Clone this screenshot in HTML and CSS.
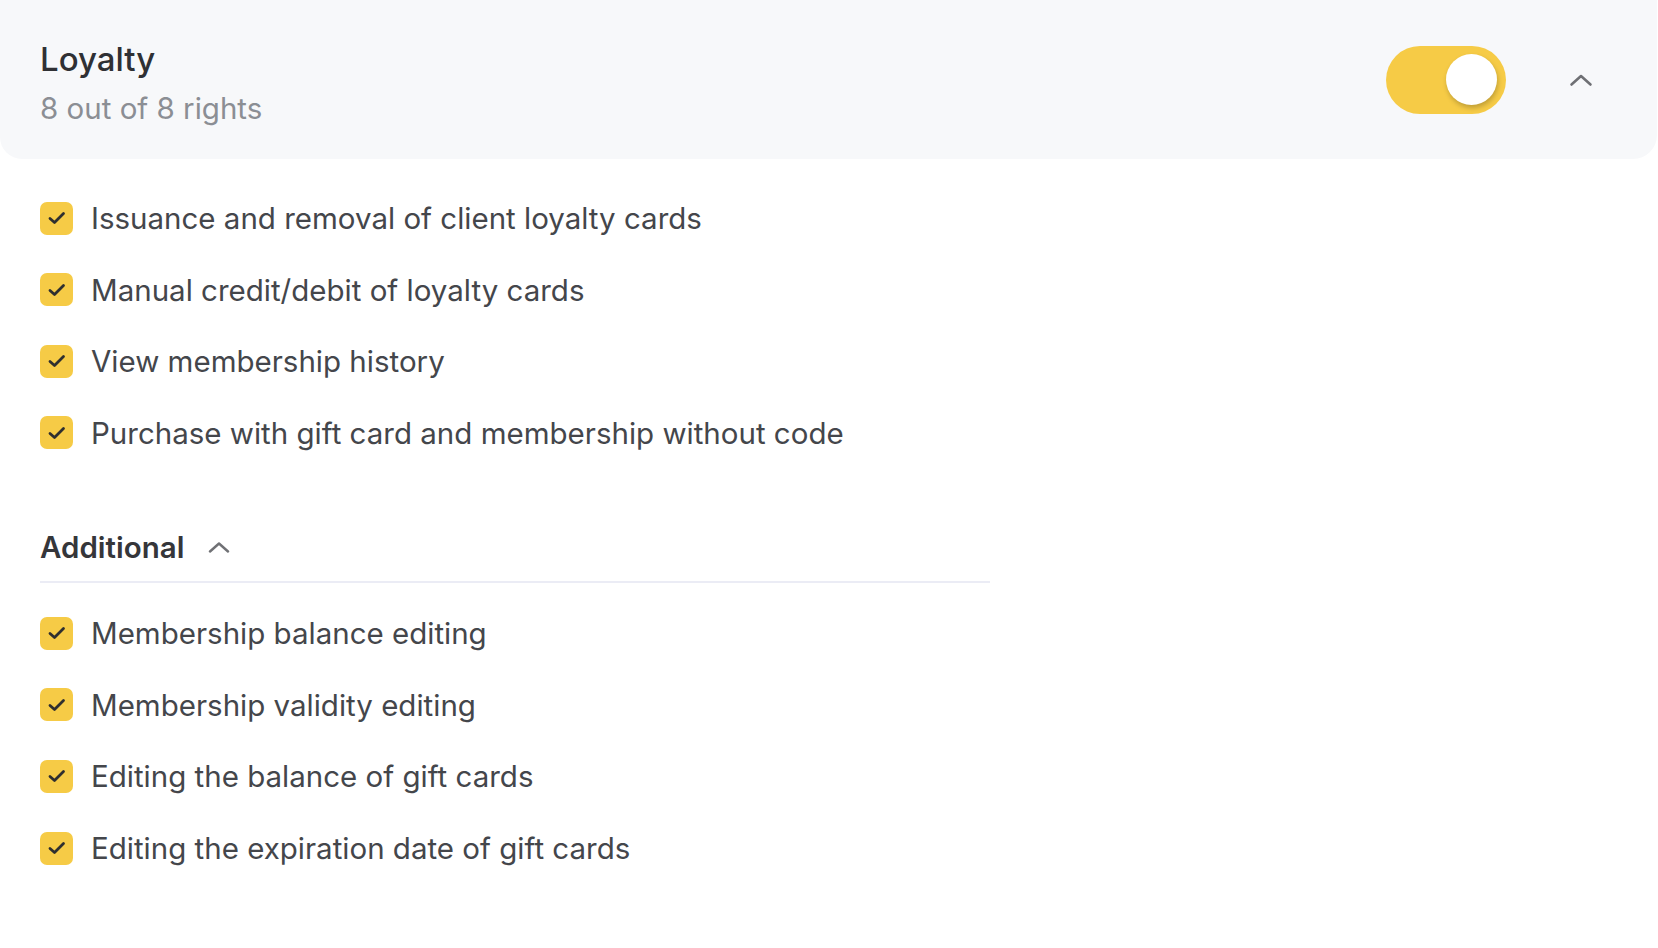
FILE: index.html
```html
<!DOCTYPE html>
<html lang="en">
<head>
<meta charset="utf-8">
<title>Loyalty rights</title>
<link rel="stylesheet" href="styles.css">
</head>
<body>
<section class="group">
  <header class="group-head">
    <div class="head-text">
      <div class="title">Loyalty</div>
      <div class="subtitle">8 out of 8 rights</div>
    </div>
    <div class="head-actions">
      <div class="toggle on"><span class="knob"></span></div>
      <svg class="chev-big" width="24" height="14" viewBox="0 0 24 14"><polyline points="2.5,11.5 12,3 21.5,11.5" fill="none" stroke="#6f7074" stroke-width="2.6" stroke-linecap="round" stroke-linejoin="round"/></svg>
    </div>
  </header>
  <div class="group-body">
    <ul class="rights first">
      <li class="right"><span class="cb"><svg width="20" height="16" viewBox="0 0 20 16"><polyline points="3,8.5 7.5,12.5 16.5,3.5" fill="none" stroke="#2f2f2f" stroke-width="2.8" stroke-linecap="round" stroke-linejoin="round"/></svg></span><span class="label">Issuance and removal of client loyalty cards</span></li>
      <li class="right"><span class="cb"><svg width="20" height="16" viewBox="0 0 20 16"><polyline points="3,8.5 7.5,12.5 16.5,3.5" fill="none" stroke="#2f2f2f" stroke-width="2.8" stroke-linecap="round" stroke-linejoin="round"/></svg></span><span class="label">Manual credit/debit of loyalty cards</span></li>
      <li class="right"><span class="cb"><svg width="20" height="16" viewBox="0 0 20 16"><polyline points="3,8.5 7.5,12.5 16.5,3.5" fill="none" stroke="#2f2f2f" stroke-width="2.8" stroke-linecap="round" stroke-linejoin="round"/></svg></span><span class="label">View membership history</span></li>
      <li class="right"><span class="cb"><svg width="20" height="16" viewBox="0 0 20 16"><polyline points="3,8.5 7.5,12.5 16.5,3.5" fill="none" stroke="#2f2f2f" stroke-width="2.8" stroke-linecap="round" stroke-linejoin="round"/></svg></span><span class="label">Purchase with gift card and membership without code</span></li>
    </ul>
    <div class="sub-head">
      <span class="sub-title">Additional</span>
      <svg class="chev-small" width="22" height="12" viewBox="0 0 22 12"><polyline points="2,10.5 11,2.5 20,10.5" fill="none" stroke="#707175" stroke-width="2.4" stroke-linecap="round" stroke-linejoin="round"/></svg>
    </div>
    <div class="divider"></div>
    <ul class="rights second">
      <li class="right"><span class="cb"><svg width="20" height="16" viewBox="0 0 20 16"><polyline points="3,8.5 7.5,12.5 16.5,3.5" fill="none" stroke="#2f2f2f" stroke-width="2.8" stroke-linecap="round" stroke-linejoin="round"/></svg></span><span class="label">Membership balance editing</span></li>
      <li class="right"><span class="cb"><svg width="20" height="16" viewBox="0 0 20 16"><polyline points="3,8.5 7.5,12.5 16.5,3.5" fill="none" stroke="#2f2f2f" stroke-width="2.8" stroke-linecap="round" stroke-linejoin="round"/></svg></span><span class="label">Membership validity editing</span></li>
      <li class="right"><span class="cb"><svg width="20" height="16" viewBox="0 0 20 16"><polyline points="3,8.5 7.5,12.5 16.5,3.5" fill="none" stroke="#2f2f2f" stroke-width="2.8" stroke-linecap="round" stroke-linejoin="round"/></svg></span><span class="label">Editing the balance of gift cards</span></li>
      <li class="right"><span class="cb"><svg width="20" height="16" viewBox="0 0 20 16"><polyline points="3,8.5 7.5,12.5 16.5,3.5" fill="none" stroke="#2f2f2f" stroke-width="2.8" stroke-linecap="round" stroke-linejoin="round"/></svg></span><span class="label">Editing the expiration date of gift cards</span></li>
    </ul>
  </div>
</section>
</body>
</html>
```
FILE: styles.css
```css
html, body {
  margin: 0;
  padding: 0;
  background: #ffffff;
}
body {
  font-family: Inter, "Noto Sans", "Liberation Sans", sans-serif;
  width: 1658px;
  height: 948px;
  overflow: hidden;
}
.group-head {
  height: 159px;
  box-sizing: border-box;
  width: 1657px;
  background: #f7f8fa;
  border-radius: 0 0 24px 22px;
  display: flex;
  align-items: center;
  justify-content: space-between;
  padding: 0 64px 0 40px;
}
.head-text {
  display: flex;
  flex-direction: column;
  margin-top: 6px;
}
.title {
  font-size: 33px;
  line-height: 40px;
  font-weight: 500;
  color: #2f3034;
}
.subtitle {
  margin-top: 11px;
  font-size: 29.5px;
  line-height: 36px;
  color: #8b8e94;
}
.head-actions {
  display: flex;
  align-items: center;
  gap: 63px;
  margin-top: 0;
}
.toggle {
  width: 120px;
  height: 68px;
  border-radius: 34px;
  background: #f6cb46;
  position: relative;
}
.toggle .knob {
  position: absolute;
  right: 9px;
  top: 8.5px;
  width: 51px;
  height: 51px;
  border-radius: 50%;
  background: #ffffff;
  box-shadow: 1px 3px 5px rgba(0, 0, 0, 0.22);
}
.chev-big {
  display: block;
}
.group-body {
  padding: 0 40px;
}
.rights {
  list-style: none;
  margin: 0;
  padding: 0;
  display: flex;
  flex-direction: column;
  gap: 31.6px;
}
.rights.first {
  margin-top: 39px;
}
.rights.second {
  margin-top: 30px;
}
.right {
  display: flex;
  align-items: center;
  height: 40px;
}
.cb {
  width: 33px;
  height: 33px;
  border-radius: 7px;
  background: #f6cb46;
  display: flex;
  align-items: center;
  justify-content: center;
  flex: none;
}
.cb svg {
  display: block;
}
.label {
  margin-left: 18px;
  font-size: 29.5px;
  line-height: 40px;
  color: #44464b;
}
.sub-head {
  margin-top: 74.5px;
  height: 40px;
  display: flex;
  align-items: center;
  gap: 24px;
}
.sub-title {
  font-size: 29.5px;
  line-height: 40px;
  font-weight: 600;
  color: #35363a;
}
.chev-small {
  display: block;
}
.divider {
  margin-top: 14px;
  width: 950px;
  height: 2px;
  background: #ebecf5;
}
```
